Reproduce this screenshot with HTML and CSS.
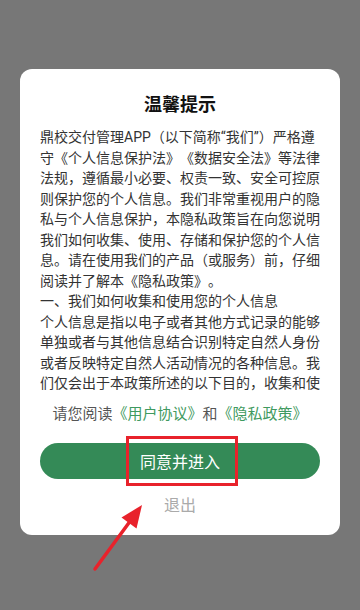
FILE: index.html
```html
<!DOCTYPE html>
<html lang="zh-CN">

<head>
    <meta charset="UTF-8">
    <meta name="viewport" content="width=device-width, initial-scale=1.0">
    <title>温馨提示</title>
    <link rel="stylesheet" href="styles.css">
</head>

<body>
    <div class="mask">
        <div class="dialog">
            <h2 class="title">温馨提示</h2>
            <div class="content">
                <p>鼎校交付管理APP（以下简称“我们”）严格遵守《个人信息保护法》《数据安全法》等法律法规，遵循最小必要、权责一致、安全可控原则保护您的个人信息。我们非常重视用户的隐私与个人信息保护，本隐私政策旨在向您说明我们如何收集、使用、存储和保护您的个人信息。请在使用我们的产品（或服务）前，仔细阅读并了解本《隐私政策》。</p>
                <p>一、我们如何收集和使用您的个人信息</p>
                <p>个人信息是指以电子或者其他方式记录的能够单独或者与其他信息结合识别特定自然人身份或者反映特定自然人活动情况的各种信息。我们仅会出于本政策所述的以下目的，收集和使用您的个人信息。</p>
            </div>
            <p class="links">请您阅读<a href="#">《用户协议》</a>和<a href="#">《隐私政策》</a></p>
            <div class="btn-wrap">
                <button class="agree">同意并进入</button>
                <span class="mark"></span>
            </div>
            <button class="quit">退出</button>
        </div>
    </div>

    <svg class="arrow" width="360" height="610" viewBox="0 0 360 610">
        <line x1="95" y1="569" x2="131" y2="520" stroke="#e8222b" stroke-width="3.5" stroke-linecap="round" />
        <polygon points="142,505 121.5,517.5 136.5,528.5" fill="#e8222b" />
    </svg>
</body>

</html>
```

FILE: styles.css
```css
* {
    margin: 0;
    padding: 0;
    box-sizing: border-box;
}

body {
    background-color: #777777;
    font-family: Roboto, "Noto Sans CJK SC", sans-serif;
    text-spacing-trim: space-all;
    width: 360px;
    height: 610px;
    overflow: hidden;
}

.mask {
    padding: 69px 20px 0;
}

.dialog {
    background-color: #fff;
    border-radius: 12px;
    padding: 22px 0 20px 20px;
    display: flex;
    flex-direction: column;
}

.title {
    font-family: "Noto Sans CJK SC", sans-serif;
    font-size: 18px;
    font-weight: bold;
    line-height: 24px;
    color: #111;
    text-align: center;
    padding-right: 20px;
}

.content {
    margin-top: 12px;
    height: 268px;
    overflow: hidden;
    font-size: 14px;
    line-height: 20.5px;
    color: #333;
    padding-right: 12px;
}

.links {
    margin-top: 8px;
    font-size: 15px;
    line-height: 22px;
    color: #555;
    text-align: center;
    padding-right: 20px;
}

.links a {
    color: #3f9a60;
    text-decoration: none;
}

.btn-wrap {
    position: relative;
    margin-top: 18px;
    margin-right: 20px;
}

.agree {
    width: 100%;
    height: 36px;
    border: none;
    border-radius: 18px;
    background-color: #348a57;
    color: #fff;
    font-family: "Noto Sans CJK SC", sans-serif;
    font-size: 16px;
}

.mark {
    position: absolute;
    left: 86px;
    top: -7px;
    width: 112px;
    height: 50px;
    border: 3.5px solid #e8222b;
}

.quit {
    margin-top: 14px;
    margin-right: 20px;
    border: none;
    background: none;
    font-family: "Noto Sans CJK SC", sans-serif;
    font-size: 16px;
    line-height: 22px;
    color: #aaa;
}

.arrow {
    position: absolute;
    left: 0;
    top: 0;
}
```
